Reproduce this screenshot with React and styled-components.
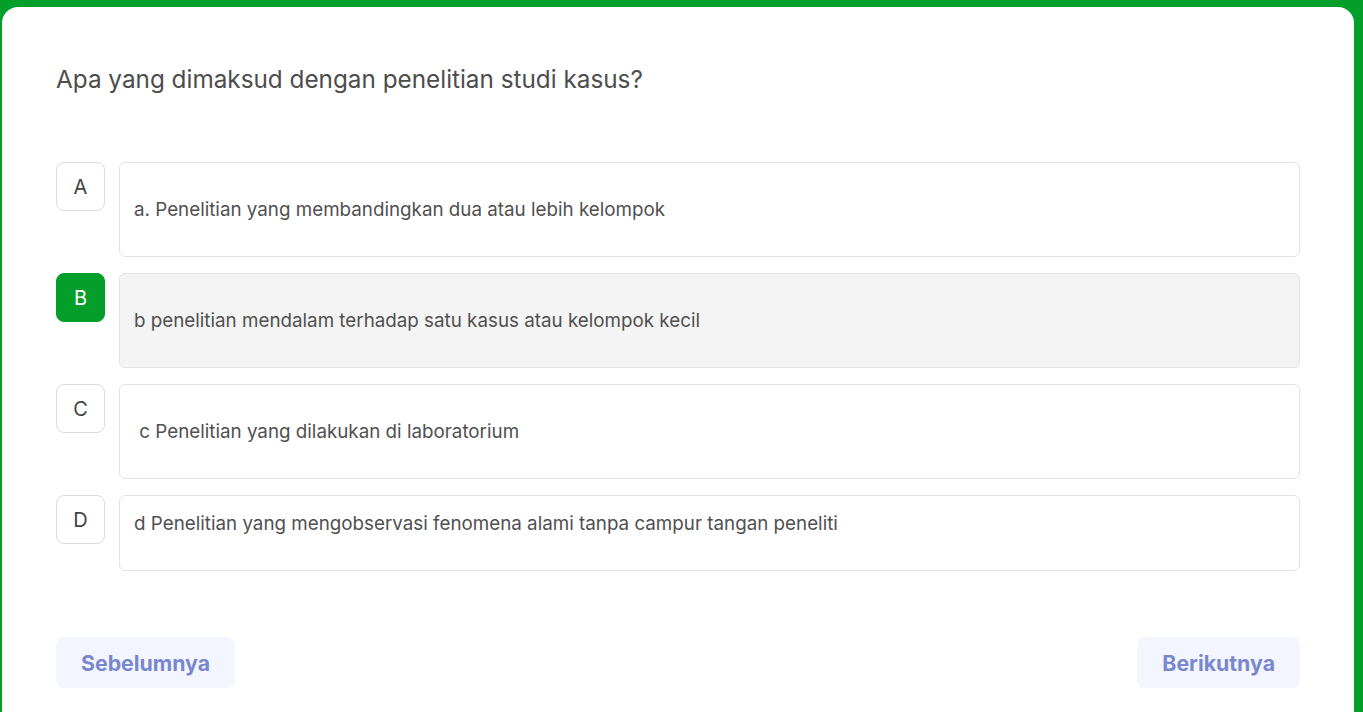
import styled, { createGlobalStyle } from "styled-components";

const GlobalStyle = createGlobalStyle`
  html, body {
    margin: 0;
    background-color: #049e2a;
    font-family: "Inter", "Noto Sans", sans-serif;
  }
  body {
    padding: 7px 9px 0 2px;
    height: 712px;
    box-sizing: border-box;
    overflow: hidden;
  }
`;

const Card = styled.div`
  background-color: #ffffff;
  border-radius: 16px 16px 0 0;
  padding: 56px 54px 40px;
  min-height: 720px;
  box-sizing: border-box;
`;

const Question = styled.h2`
  margin: 0 0 67px;
  font-size: 24.3px;
  font-weight: 400;
  line-height: 32px;
  color: #4d4d4d;
`;

const OptionList = styled.div`
  display: flex;
  flex-direction: column;
  gap: 16px;
`;

const OptionRow = styled.div`
  display: flex;
  align-items: flex-start;
  gap: 14px;
`;

const Letter = styled.div`
  flex: 0 0 auto;
  width: 49px;
  height: 49px;
  box-sizing: border-box;
  border-radius: 8px;
  border: 1px solid ${(p) => (p.$active ? "#049e2a" : "#dcdcdc")};
  background-color: ${(p) => (p.$active ? "#049e2a" : "#ffffff")};
  color: ${(p) => (p.$active ? "#ffffff" : "#444444")};
  display: flex;
  align-items: center;
  justify-content: center;
  font-size: 20px;
`;

const OptionCard = styled.div`
  flex: 1;
  box-sizing: border-box;
  border: 1px solid #e3e3e3;
  border-radius: 6px;
  background-color: ${(p) => (p.$active ? "#f4f4f4" : "#ffffff")};
  padding: 16px 14px 14px;
`;

const OptionText = styled.p`
  margin: ${(p) => (p.$spaced ? "19px" : "0")} 0 20px;
  font-size: 18.8px;
  line-height: 24px;
  color: #505050;
`;

const Footer = styled.div`
  display: flex;
  justify-content: space-between;
  margin-top: 66px;
`;

const NavButton = styled.button`
  height: 51px;
  padding: 0 25px;
  border: none;
  border-radius: 8px;
  background-color: #f3f6fe;
  color: #7a87cf;
  font-family: "Inter", "Noto Sans", sans-serif;
  font-size: 21.3px;
  font-weight: 700;
  cursor: pointer;
`;

const options = [
  { key: "A", text: "a. Penelitian yang membandingkan dua atau lebih kelompok", spaced: true },
  { key: "B", text: "b penelitian mendalam terhadap satu kasus atau kelompok kecil", spaced: true },
  { key: "C", text: "\u00a0c Penelitian yang dilakukan di laboratorium", spaced: true },
  { key: "D", text: "d Penelitian yang mengobservasi fenomena alami tanpa campur tangan peneliti", spaced: false },
];

export default function App() {
  const selected = "B";

  return (
    <>
      <GlobalStyle />
      <Card>
        <Question>Apa yang dimaksud dengan penelitian studi kasus?</Question>
        <OptionList>
          {options.map((opt) => (
            <OptionRow key={opt.key}>
              <Letter $active={opt.key === selected}>{opt.key}</Letter>
              <OptionCard $active={opt.key === selected}>
                <OptionText $spaced={opt.spaced}>{opt.text}</OptionText>
              </OptionCard>
            </OptionRow>
          ))}
        </OptionList>
        <Footer>
          <NavButton>Sebelumnya</NavButton>
          <NavButton>Berikutnya</NavButton>
        </Footer>
      </Card>
    </>
  );
}
